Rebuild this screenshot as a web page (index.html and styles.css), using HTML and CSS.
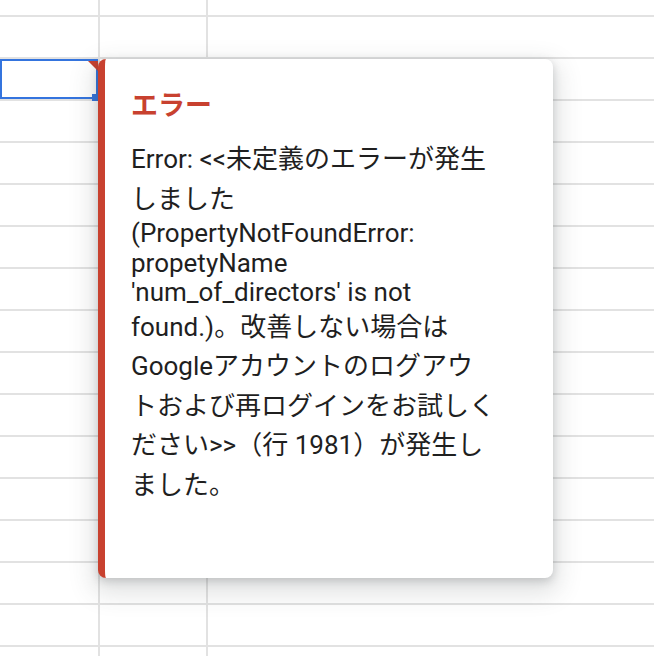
FILE: index.html
```html
<!DOCTYPE html>
<html lang="ja">
<head>
    <meta charset="UTF-8">
    <meta name="viewport" content="width=device-width, initial-scale=1.0">
    <title>Sheet error</title>
    <link rel="stylesheet" href="styles.css">
</head>
<body>
    <div class="sheet">
        <div class="cell"></div><div class="cell"></div><div class="cell"></div>
        <div class="cell"></div><div class="cell"></div><div class="cell"></div>
        <div class="cell selected has-error"><span class="fill-handle"></span></div><div class="cell"></div><div class="cell"></div>
        <div class="cell"></div><div class="cell"></div><div class="cell"></div>
        <div class="cell"></div><div class="cell"></div><div class="cell"></div>
        <div class="cell"></div><div class="cell"></div><div class="cell"></div>
        <div class="cell"></div><div class="cell"></div><div class="cell"></div>
        <div class="cell"></div><div class="cell"></div><div class="cell"></div>
        <div class="cell"></div><div class="cell"></div><div class="cell"></div>
        <div class="cell"></div><div class="cell"></div><div class="cell"></div>
        <div class="cell"></div><div class="cell"></div><div class="cell"></div>
        <div class="cell"></div><div class="cell"></div><div class="cell"></div>
        <div class="cell"></div><div class="cell"></div><div class="cell"></div>
        <div class="cell"></div><div class="cell"></div><div class="cell"></div>
        <div class="cell"></div><div class="cell"></div><div class="cell"></div>
        <div class="cell"></div><div class="cell"></div><div class="cell"></div>
        <div class="cell"></div><div class="cell"></div><div class="cell"></div>
    </div>

    <div class="error-popup">
        <h2 class="error-title">エラー</h2>
        <p class="error-text">Error: &lt;&lt;<span class="ja">未定義のエラーが発生しました</span>(PropertyNotFoundError: propetyName 'num_of_directors' is not found.)<span class="ja">。改善しない場合は</span>Google<span class="ja">アカウントのログアウトおよび再ログインをお試しください</span>&gt;&gt;<span class="ja">（行</span> 1981<span class="ja">）が発生しました。</span></p>
    </div>
</body>
</html>
```

FILE: styles.css
```css
* {
    margin: 0;
    padding: 0;
    box-sizing: border-box;
}

body {
    width: 654px;
    height: 656px;
    overflow: hidden;
    background: #ffffff;
    font-family: Roboto, "Noto Sans CJK JP", sans-serif;
}

/* Spreadsheet grid */
.sheet {
    display: grid;
    grid-template-columns: 98px 106px 1fr;
    grid-template-rows: 15px;
    grid-auto-rows: 40px;
    gap: 2px;
    background-color: #e2e2e2;
    height: 100%;
}

.cell {
    background-color: #ffffff;
    position: relative;
}

.cell.selected {
    box-shadow: inset 0 0 0 2px #3474de;
}

/* red corner marker for a cell with an error */
.cell.has-error::before {
    content: "";
    position: absolute;
    top: 2px;
    right: 0;
    border-top: 10px solid #c8412f;
    border-left: 10px solid transparent;
}

.fill-handle {
    position: absolute;
    right: -5px;
    bottom: -6px;
    width: 11px;
    height: 11px;
    background-color: #3474de;
}

/* Error tooltip */
.error-popup {
    position: absolute;
    left: 98px;
    top: 59px;
    width: 455px;
    height: 519px;
    background-color: #ffffff;
    border-left: 7px solid #c8412f;
    border-radius: 8px;
    padding: 25px 57px 0 26px;
    box-shadow: 0 3px 8px rgba(60, 64, 67, 0.22), 0 10px 24px 6px rgba(60, 64, 67, 0.15);
}

.error-title {
    color: #c8412f;
    font-size: 27px;
    font-weight: bold;
    margin-bottom: 17px;
}

.error-text {
    color: #1f1f1f;
    font-size: 26px;
    line-height: 29.5px;
}

/* Japanese runs sit on taller lines than the latin ones */
.error-text .ja {
    line-height: 39.5px;
}
```
